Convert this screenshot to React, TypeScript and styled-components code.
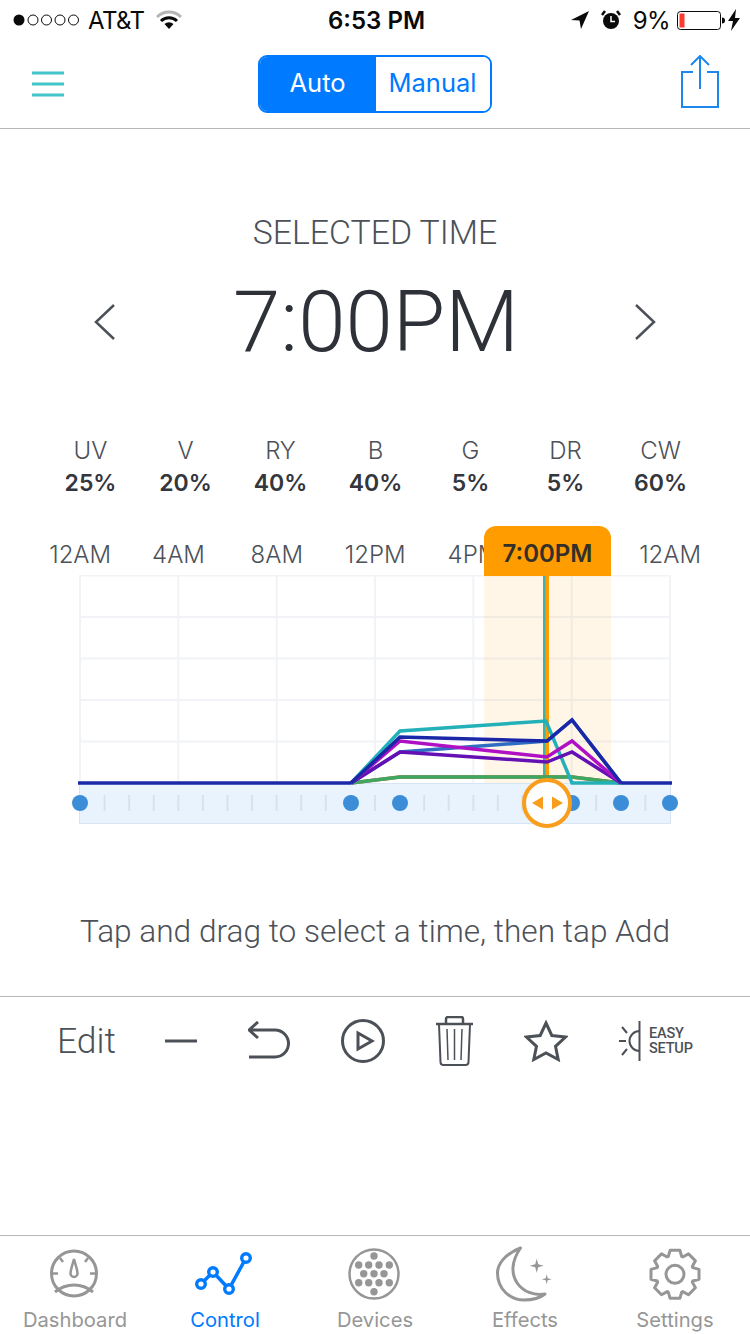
import React, { FC } from 'react';
import styled, { createGlobalStyle } from 'styled-components';

const Global = createGlobalStyle`
  html, body {
    margin: 0;
    padding: 0;
    background: #fff;
  }
  body {
    font-family: Roboto, "Liberation Sans", sans-serif;
  }
`;

const Screen = styled.div`
  width: 750px;
  height: 1334px;
  display: flex;
  flex-direction: column;
  overflow: hidden;
  background: #fff;
`;

const StatusBar = styled.div`
  height: 40px;
  padding: 0 10px 0 13px;
  display: grid;
  grid-template-columns: 1fr auto 1fr;
  align-items: center;
  font-family: Inter, "Liberation Sans", sans-serif;
  font-size: 24px;
  color: #0a0a0a;
`;

const StatusSide = styled.div<{ $end?: boolean }>`
  display: flex;
  align-items: center;
  justify-content: ${p => (p.$end ? 'flex-end' : 'flex-start')};
`;

const Carrier = styled.span`
  margin: 0 12px 0 7px;
  font-size: 24px;
  font-weight: 400;
  letter-spacing: -0.6px;
`;

const Clock = styled.span`
  font-size: 24px;
  font-weight: 600;
`;

const Battery = styled.span`
  margin: 0 7px 0 12px;
  font-size: 24px;
  letter-spacing: -0.6px;
`;

const NavBar = styled.div`
  height: 88px;
  padding: 0 31px 0 32px;
  box-sizing: content-box;
  border-bottom: 1px solid #b7b7b7;
  display: flex;
  align-items: center;
  justify-content: space-between;
`;

const Segmented = styled.div`
  width: 234px;
  height: 58px;
  margin: -1px 0 0 4px;
  box-sizing: border-box;
  border: 2px solid #007aff;
  border-radius: 9px;
  display: flex;
  overflow: hidden;
  font-family: Inter, "Liberation Sans", sans-serif;
  font-size: 25.5px;
`;

const Segment = styled.div<{ $active?: boolean }>`
  flex: 0 0 ${p => (p.$active ? '116px' : '114px')};
  display: flex;
  align-items: center;
  justify-content: center;
  padding-bottom: 2px;
  background: ${p => (p.$active ? '#007aff' : '#fff')};
  color: ${p => (p.$active ? '#fff' : '#007aff')};
`;

const Heading = styled.div`
  margin-top: 84px;
  height: 40px;
  line-height: 40px;
  text-align: center;
  font-size: 33.8px;
  font-weight: 300;
  color: #4c5158;
`;

const TimeRow = styled.div`
  height: 100px;
  margin-top: 19px;
  padding: 0 93px;
  display: flex;
  align-items: center;
  justify-content: space-between;
`;

const BigTime = styled.div`
  margin-left: 2px;
  font-size: 85.2px;
  font-weight: 300;
  color: #2e3138;
`;

const Channels = styled.div`
  margin-top: 64px;
  padding: 0 43px;
  display: grid;
  grid-template-columns: repeat(7, 95px);
`;

const Channel = styled.div`
  display: flex;
  flex-direction: column;
  align-items: center;
  font-family: Inter, "Liberation Sans", sans-serif;
`;

const ChannelName = styled.div`
  height: 30px;
  line-height: 30px;
  font-size: 24px;
  font-weight: 300;
  color: #4c5158;
`;

const ChannelValue = styled.div`
  height: 34px;
  line-height: 34px;
  font-size: 23px;
  font-weight: 600;
  color: #33363c;
`;

const ChartBlock = styled.div`
  position: relative;
  margin-top: 26px;
`;

const HourRow = styled.div`
  height: 49px;
  padding: 0 31px;
  display: grid;
  grid-template-columns: repeat(7, 98.33px);
  align-items: start;
`;

const Hour = styled.div`
  line-height: 57px;
  text-align: center;
  font-family: Inter, "Liberation Sans", sans-serif;
  font-size: 24px;
  font-weight: 300;
  color: #4c5158;
`;

const TimeTab = styled.div`
  position: absolute;
  left: 484px;
  top: 0;
  width: 127px;
  height: 50px;
  padding-top: 3px;
  box-sizing: border-box;
  border-radius: 12px 12px 0 0;
  background: #ff9d00;
  color: #33302a;
  font-family: Inter, "Liberation Sans", sans-serif;
  font-size: 24px;
  font-weight: 600;
  line-height: 50px;
  text-align: center;
`;

const ChartSvg = styled.svg`
  display: block;
  width: 750px;
  height: 260px;
`;

const Hint = styled.div`
  margin-top: 77px;
  height: 40px;
  line-height: 40px;
  text-align: center;
  font-size: 31.6px;
  font-weight: 300;
  color: #4c5158;
`;

const Toolbar = styled.div`
  margin-top: 44px;
  height: 90px;
  padding: 0 0 2px 57px;
  box-sizing: border-box;
  border-top: 1px solid #b7b7b7;
  display: flex;
  align-items: center;
  gap: 51px;
  color: #4c5158;
`;

const EditLabel = styled.div`
  width: 57px;
  font-size: 35.5px;
  font-weight: 300;
  line-height: 88px;
`;

const EasySetup = styled.div`
  display: flex;
  align-items: center;
  gap: 2px;
`;

const EasyText = styled.div`
  font-size: 14.5px;
  line-height: 15px;
  font-weight: 500;
  letter-spacing: -0.2px;
`;

const TabBar = styled.div`
  margin-top: auto;
  height: 98px;
  border-top: 1px solid #b7b7b7;
  display: grid;
  grid-template-columns: repeat(5, 150px);
`;

const TabItem = styled.div<{ $active?: boolean }>`
  display: flex;
  flex-direction: column;
  align-items: center;
  padding-top: 8px;
  color: ${p => (p.$active ? '#007aff' : '#969696')};
`;

const TabIconBox = styled.svg`
  display: block;
  width: 64px;
  height: 60px;
`;

const TabLabel = styled.div`
  margin-top: 4px;
  font-family: Inter, "Liberation Sans", sans-serif;
  font-size: 20.2px;
  line-height: 24px;
`;

// chart data in page coordinates, drawn in the order they stack
const series = [
  { color: '#c05a3a', points: '351,783 400,777 572,777 621,783' },
  { color: '#3fa860', points: '351,783 400,777 572,777 621,783' },
  { color: '#24b0b8', points: '351,783 400,731 546,721 572,783 621,783' },
  { color: '#2f6cc4', points: '351,783 400,752 547,741 572,720 621,783' },
  { color: '#6410b4', points: '351,783 400,752 547,762 572,752 621,783' },
  { color: '#b010c4', points: '351,783 400,741 547,757 572,741 621,783' },
  { color: '#1a28a8', points: '351,783 400,737 547,741 572,720 621,783' },
];

const gridX = [80, 178.3, 276.7, 375, 473.3, 571.7, 670];
const gridY = [575.5, 617, 658.5, 700, 741.5];
const ticks = Array.from({ length: 25 }, (_, i) => 80 + i * 24.58);
const dots = [80, 351, 400, 572, 621, 670];

const Chart: FC = () => (
  <ChartSvg viewBox="0 575 750 260">
    {gridX.map(x => (
      <line key={x} x1={x} x2={x} y1={575} y2={783} stroke="#f1f3f7" strokeWidth={2} />
    ))}
    {gridY.map(y => (
      <line key={y} x1={80} x2={670} y1={y} y2={y} stroke="#f1f3f7" strokeWidth={2} />
    ))}
    <rect x={484} y={575} width={127} height={208} fill="#ff9d00" opacity={0.09} />
    <rect x={79.5} y={783.5} width={591} height={40} fill="#e9f3fe" stroke="#d6e4f3" />
    {ticks.map(x => (
      <line key={x} x1={x} x2={x} y1={795} y2={811} stroke="#d5e3f1" strokeWidth={2} />
    ))}
    {dots.map(x => (
      <circle key={x} cx={x} cy={803} r={8} fill="#3a8dd6" />
    ))}
    <rect x={543} y={575} width={3} height={208} fill="#3fb3a8" />
    <rect x={545.5} y={575} width={3.5} height={208} fill="#ff9d00" />
    {series.map((s, i) => (
      <polyline key={i} points={s.points} fill="none" stroke={s.color} strokeWidth={3.5} strokeLinejoin="miter" />
    ))}
    <line x1={78} x2={351} y1={783} y2={783} stroke="#1a28a8" strokeWidth={3.5} />
    <line x1={621} x2={672} y1={783} y2={783} stroke="#1a28a8" strokeWidth={3.5} />
    <circle cx={547} cy={803} r={23} fill="#fff" stroke="#f99d1c" strokeWidth={4} />
    <path d="M532 803l11-6.500v13zM563 803l-11-6.500v13z" fill="#f99d1c" />
  </ChartSvg>
);

const SignalDots: FC = () => (
  <svg width="68" height="14" viewBox="0 0 68 14">
    <circle cx="6" cy="7" r="5.5" fill="#0a0a0a" />
    {[20, 33.5, 47, 60.5].map(x => (
      <circle key={x} cx={x} cy="7" r="5" fill="none" stroke="#0a0a0a" />
    ))}
  </svg>
);

const WifiIcon: FC = () => (
  <svg width="26" height="20" viewBox="0 0 26 20">
    <path d="M1 7a17 17 0 0 1 24 0" fill="none" stroke="#b5b5b5" strokeWidth="3" />
    <path d="M5 11a11.500 11.500 0 0 1 16 0" fill="none" stroke="#0a0a0a" strokeWidth="3" />
    <path d="M8.500 14a6.500 6.500 0 0 1 9 0L13 19z" fill="#0a0a0a" />
  </svg>
);

const LocationIcon: FC = () => (
  <svg width="20" height="20" viewBox="0 0 20 20" style={{ marginRight: 11 }}>
    <path d="M19 1L1 10l8.500 .5L11 19z" fill="#0a0a0a" />
  </svg>
);

const AlarmIcon: FC = () => (
  <svg width="20" height="22" viewBox="0 0 20 22">
    <circle cx="10" cy="12" r="8" fill="#0a0a0a" />
    <path d="M10 7v5.500h4" fill="none" stroke="#fff" strokeWidth="1.500" />
    <path d="M1 6l3-4M19 6l-3-4" stroke="#0a0a0a" strokeWidth="2.500" />
  </svg>
);

const BatteryIcon: FC = () => (
  <svg width="48" height="19" viewBox="0 0 48 19">
    <rect x="0.500" y="0.500" width="43" height="18" rx="3" fill="none" stroke="#0a0a0a" />
    <rect x="2.500" y="2.500" width="5" height="14" fill="#ff3b30" />
    <path d="M45 6.500c2 0 3 1 3 3s-1 3-3 3z" fill="#0a0a0a" />
  </svg>
);

const BoltIcon: FC = () => (
  <svg width="12" height="22" viewBox="0 0 12 22" style={{ marginLeft: 3 }}>
    <path d="M8 0L0 12h5L3 22l9-13H7z" fill="#0a0a0a" />
  </svg>
);

const MenuIcon: FC = () => (
  <svg width="32" height="26" viewBox="0 0 32 26">
    <path d="M0 2h32M0 13h32M0 24h32" stroke="#41c5c9" strokeWidth="3" />
  </svg>
);

const ShareIcon: FC = () => (
  <svg width="38" height="54" viewBox="0 0 38 54" style={{ marginTop: -4 }}>
    <path d="M12 17H1v35h36V17H26" fill="none" stroke="#1a86ee" strokeWidth="2" />
    <path d="M19 1v33M10 10l9-9 9 9" fill="none" stroke="#1a86ee" strokeWidth="2" />
  </svg>
);

const Chevron: FC<{ right?: boolean }> = ({ right }) => (
  <svg width="24" height="40" viewBox="0 0 24 40">
    <path d={right ? 'M3 3l18 17L3 37' : 'M21 3L3 20l18 17'} fill="none" stroke="#4c5158" strokeWidth="2.500" />
  </svg>
);

const MinusIcon: FC = () => (
  <svg width="32" height="6" viewBox="0 0 32 6">
    <path d="M0 3h32" stroke="currentColor" strokeWidth="3" />
  </svg>
);

const UndoIcon: FC = () => (
  <svg width="42" height="40" viewBox="0 0 42 40">
    <path d="M10 1L1 9l9 8M1 9h26a13.500 13.500 0 0 1 0 27H1" fill="none" stroke="currentColor" strokeWidth="3" />
  </svg>
);

const PlayIcon: FC = () => (
  <svg width="44" height="44" viewBox="0 0 44 44">
    <circle cx="22" cy="22" r="20.500" fill="none" stroke="currentColor" strokeWidth="3" />
    <path d="M17 14l14 8-14 8z" fill="none" stroke="currentColor" strokeWidth="3" />
  </svg>
);

const TrashIcon: FC = () => (
  <svg width="37" height="50" viewBox="0 0 37 50">
    <path d="M0 8h37M10 8V3a2 2 0 0 1 2-2h13a2 2 0 0 1 2 2v5" fill="none" stroke="currentColor" strokeWidth="2.500" />
    <path d="M3 8l1.500 38a3 3 0 0 0 3 3h22a3 3 0 0 0 3-3L34 8" fill="none" stroke="currentColor" strokeWidth="2" />
    <path d="M11 13l1 31M18.500 13v31M26 13l-1 31" fill="none" stroke="currentColor" strokeWidth="1.500" />
  </svg>
);

const StarIcon: FC = () => (
  <svg width="44" height="42" viewBox="0 0 44 42">
    <path d="M22 3l5.800 12.500L41.500 17l-10 9.300 2.700 13.200L22 33l-12.200 6.500 2.700-13.200-10-9.300 13.700-1.500z" fill="none" stroke="currentColor" strokeWidth="3" />
  </svg>
);

const SunIcon: FC = () => (
  <svg width="28" height="40" viewBox="0 0 28 40">
    <path d="M20.500 0v40" stroke="currentColor" strokeWidth="2" />
    <path d="M20.500 10a10 10 0 0 0 0 20" fill="none" stroke="currentColor" strokeWidth="2" />
    <path d="M0 20h7M3 6l5 6M3 34l5-6" stroke="currentColor" strokeWidth="2" />
  </svg>
);

const TabIcon: FC<{ children: React.ReactNode }> = ({ children }) => (
  <TabIconBox viewBox="0 0 64 60">{children}</TabIconBox>
);

const DashboardIcon: FC = () => (
  <TabIcon>
    <circle cx="31" cy="29.500" r="22.500" fill="none" stroke="currentColor" strokeWidth="3" />
    <path d="M12 48c6-5 12-7 19-7s13 2 19 7" fill="none" stroke="currentColor" strokeWidth="3" />
    <path d="M31 15c-1.500 6-3.500 11-3.500 14.500a3.500 3.500 0 0 0 7 0C34.500 26 32.500 21 31 15z" fill="none" stroke="currentColor" strokeWidth="2.500" />
    <path d="M9 29.500h6M53 29.500h-6M17 14l3 4M45 14l-3 4" stroke="currentColor" strokeWidth="2.500" />
  </TabIcon>
);

const ControlIcon: FC = () => (
  <TabIcon>
    <path d="M8 40l12-12 16 17 17-31" fill="none" stroke="currentColor" strokeWidth="3.500" />
    {[[8, 40], [20, 28], [36, 45], [53, 14]].map(([cx, cy]) => (
      <circle key={cx} cx={cx} cy={cy} r="4.300" fill="#fff" stroke="currentColor" strokeWidth="3.400" />
    ))}
  </TabIcon>
);

const deviceDots = [
  [31, 12], [15.700, 21], [25.700, 21], [36, 21], [46.300, 21], [20.700, 29.700], [31, 29.700], [41, 29.700],
  [15.700, 38.700], [25.700, 38.700], [36, 38.700], [46.300, 38.700], [31, 47.700],
];

const DevicesIcon: FC = () => (
  <TabIcon>
    <circle cx="31" cy="30" r="24.500" fill="#fff" stroke="currentColor" strokeWidth="2.500" />
    {deviceDots.map(([cx, cy]) => (
      <circle key={`${cx}-${cy}`} cx={cx} cy={cy} r="3.700" fill="currentColor" />
    ))}
  </TabIcon>
);

const EffectsIcon: FC = () => (
  <TabIcon>
    <path d="M27.500 4C12 10 4.500 20 4.500 29 4.500 45 17 56 31 56c8 0 16-2 21-6C30 54 8 32 27.500 4z" fill="none" stroke="currentColor" strokeWidth="3" strokeLinejoin="round" />
    <path d="M43.700 14.700l1.500 5.500 5.500 1.500-5.500 1.500-1.500 5.500-1.500-5.500-5.500-1.500 5.500-1.500zM53.700 30.300l1 4 4 1-4 1-1 4-1-4-4-1 4-1z" fill="currentColor" />
  </TabIcon>
);

// eight tooth gear outline around the centre of the tab icon
const gearPoints = Array.from({ length: 8 }, (_, i) => {
  const a = (i * Math.PI) / 4 - Math.PI / 2;
  const at = (r: number, d: number) =>
    `${(32 + r * Math.cos(a + d)).toFixed(1)},${(30.3 + r * Math.sin(a + d)).toFixed(1)}`;
  return [at(19, -0.36), at(24.500, -0.2), at(24.500, 0.2), at(19, 0.36)].join(' ');
}).join(' ');

const SettingsIcon: FC = () => (
  <TabIcon>
    <polygon points={gearPoints} fill="none" stroke="currentColor" strokeWidth="3" strokeLinejoin="round" />
    <circle cx="32" cy="30.300" r="9" fill="none" stroke="currentColor" strokeWidth="3" />
  </TabIcon>
);

const channels = [
  ['UV', '25%'], ['V', '20%'], ['RY', '40%'], ['B', '40%'], ['G', '5%'], ['DR', '5%'], ['CW', '60%'],
];

const hours = ['12AM', '4AM', '8AM', '12PM', '4PM', '', '12AM'];

const tabs = [
  { label: 'Dashboard', icon: <DashboardIcon /> },
  { label: 'Control', icon: <ControlIcon />, active: true },
  { label: 'Devices', icon: <DevicesIcon /> },
  { label: 'Effects', icon: <EffectsIcon /> },
  { label: 'Settings', icon: <SettingsIcon /> },
];

const App: FC = () => (
  <Screen>
    <Global />
    <StatusBar>
      <StatusSide>
        <SignalDots />
        <Carrier>AT&amp;T</Carrier>
        <WifiIcon />
      </StatusSide>
      <Clock>6:53 PM</Clock>
      <StatusSide $end>
        <LocationIcon />
        <AlarmIcon />
        <Battery>9%</Battery>
        <BatteryIcon />
        <BoltIcon />
      </StatusSide>
    </StatusBar>
    <NavBar>
      <MenuIcon />
      <Segmented>
        <Segment $active>Auto</Segment>
        <Segment>Manual</Segment>
      </Segmented>
      <ShareIcon />
    </NavBar>
    <Heading>SELECTED TIME</Heading>
    <TimeRow>
      <Chevron />
      <BigTime>7:00PM</BigTime>
      <Chevron right />
    </TimeRow>
    <Channels>
      {channels.map(([name, value]) => (
        <Channel key={name}>
          <ChannelName>{name}</ChannelName>
          <ChannelValue>{value}</ChannelValue>
        </Channel>
      ))}
    </Channels>
    <ChartBlock>
      <HourRow>
        {hours.map((h, i) => (
          <Hour key={i}>{h}</Hour>
        ))}
      </HourRow>
      <TimeTab>7:00PM</TimeTab>
      <Chart />
    </ChartBlock>
    <Hint>Tap and drag to select a time, then tap Add</Hint>
    <Toolbar>
      <EditLabel>Edit</EditLabel>
      <MinusIcon />
      <UndoIcon />
      <PlayIcon />
      <TrashIcon />
      <StarIcon />
      <EasySetup>
        <SunIcon />
        <EasyText>EASY<br />SETUP</EasyText>
      </EasySetup>
    </Toolbar>
    <TabBar>
      {tabs.map(t => (
        <TabItem key={t.label} $active={t.active}>
          {t.icon}
          <TabLabel>{t.label}</TabLabel>
        </TabItem>
      ))}
    </TabBar>
  </Screen>
);

export default App;
